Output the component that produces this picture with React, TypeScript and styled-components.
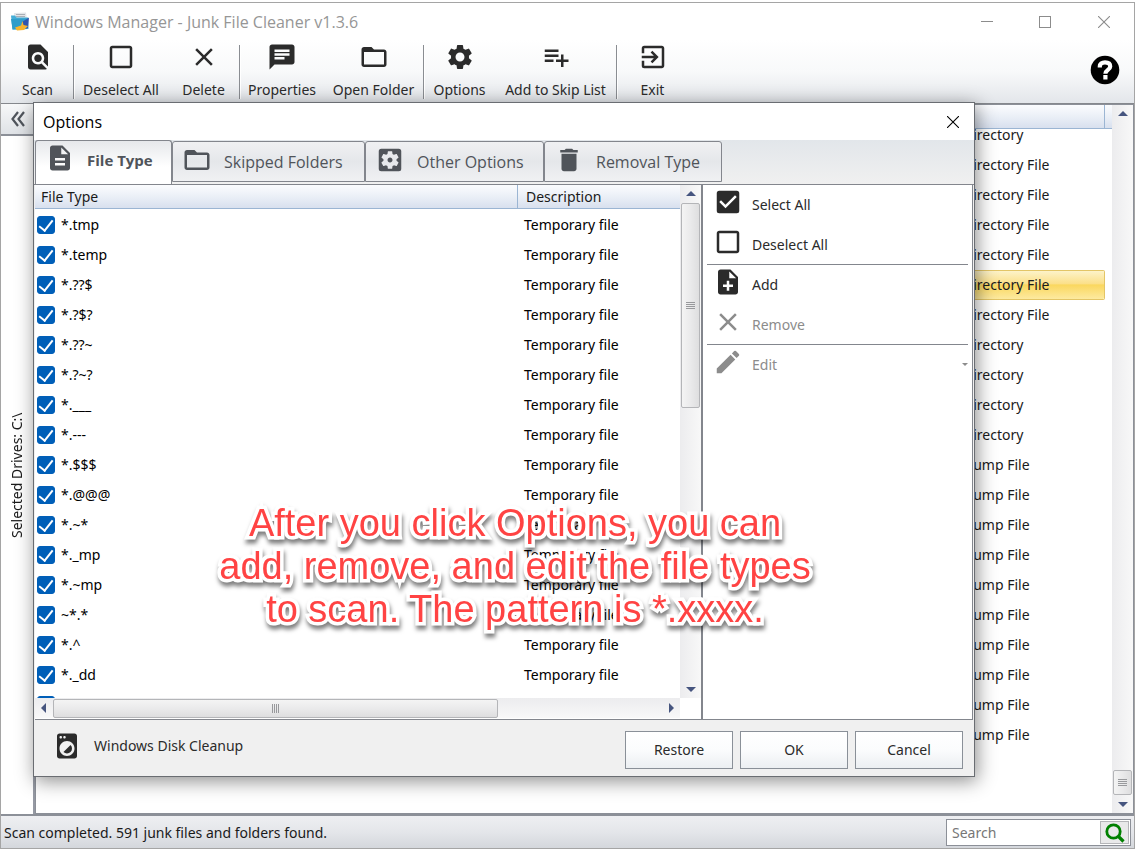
import React, { useState } from "react";
import styled, { createGlobalStyle, css } from "styled-components";
import type { IconType } from "react-icons";
import {
  MdFindInPage,
  MdCheckBoxOutlineBlank,
  MdClose,
  MdChat,
  MdFolderOpen,
  MdSettings,
  MdPlaylistAdd,
  MdExitToApp,
  MdDescription,
  MdSettingsApplications,
  MdDelete,
  MdCheckBox,
  MdNoteAdd,
  MdEdit,
  MdLocalLaundryService,
} from "react-icons/md";

const GlobalStyle = createGlobalStyle`
  * { box-sizing: border-box; }
  body {
    margin: 0;
    background: #fff;
    color: #1a1a1a;
    font-family: "Noto Sans", "Open Sans", sans-serif;
    font-size: 14px;
    line-height: 20px;
  }
  button, input { font: inherit; color: inherit; margin: 0; }
  button { border: 0; padding: 0; background: none; }
`;

const headingFont = css`
  font-family: "Open Sans", "Noto Sans", sans-serif;
  font-size: 16px;
  font-weight: 400;
`;

const AppWindow = styled.div`
  position: relative;
  display: flex;
  flex-direction: column;
  height: calc(100vh - 2px);
  margin-top: 2px;
  border: 1px solid #a5a5a5;
  overflow: hidden;
`;

const TitleBar = styled.header`
  display: flex;
  align-items: center;
  height: 37px;
  padding-left: 9px;
`;

const AppTitle = styled.h1`
  margin: 0 0 0 5px;
  flex: 1;
  ${headingFont}
  color: #969696;
`;

const CaptionButton = styled.button<{ $tone: string; $width?: number }>`
  display: grid;
  place-items: center;
  width: ${(p) => p.$width ?? 58}px;
  height: 36px;
  color: ${(p) => p.$tone};
`;

const Toolbar = styled.nav`
  display: flex;
  height: 64px;
  padding-left: 1px;
  background: linear-gradient(#fff, #f8f9fa 50%, #e3e6ea);
  border-bottom: 1px solid #85888d;
`;

const ToolItem = styled.button<{ $width: number }>`
  display: flex;
  flex-direction: column;
  align-items: center;
  gap: 8px;
  width: ${(p) => p.$width}px;
  height: 62px;
  padding-top: 2px;
  color: #2b2b2b;
  white-space: nowrap;
`;

const ToolSeparator = styled.span`
  width: 1px;
  margin: 5px 0 4px;
  background: #8a8d92;
  box-shadow: 1px 0 #fff;
`;

const HelpButton = styled.button`
  margin-left: auto;
  padding-right: 14px;
  height: 60px;
  display: grid;
  place-items: center;
  color: #000;
`;

const Workspace = styled.main`
  flex: 1;
  min-height: 0;
  display: flex;
`;

const SidePanel = styled.aside`
  display: flex;
  flex-direction: column;
  width: 34px;
  border-right: 2px solid #9599a3;
`;

const CollapseButton = styled.button`
  display: grid;
  place-items: center;
  height: 32px;
  padding-left: 2px;
  background: linear-gradient(#f7f8f9, #dfe2e6);
  border-bottom: 2px solid #8c9098;
  color: #50555c;
`;

const DrivesLabel = styled.div`
  flex: 1;
  display: flex;
  align-items: center;
  justify-content: center;
  writing-mode: vertical-rl;
  transform: rotate(180deg);
`;

const ResultsPane = styled.section`
  flex: 1;
  min-width: 0;
  display: flex;
  border: 1px solid #8c9098;
`;

const ResultsView = styled.div`
  flex: 1;
  min-width: 0;
  overflow: hidden;
  isolation: isolate;
`;

const headerFill = css`
  background: linear-gradient(#fbfcfe, #e9eef6 55%, #d8e0ee);
  border-bottom: 1px solid #9bb5d3;
  color: #1a1a1a;
`;

const ResultsHeader = styled.div`
  position: relative;
  z-index: 1;
  display: flex;
  height: 24px;
  padding-right: 7px;
  ${headerFill}
  &::after {
    content: "";
    margin-left: auto;
    border-right: 1px solid #9bb5d3;
  }
`;

const ResultsTable = styled.table`
  width: calc(100% - 7px);
  margin-top: -9px;
  border-collapse: separate;
  border-spacing: 0;
  table-layout: fixed;
`;

const ResultRow = styled.tr<{ $selected?: boolean }>`
  height: 30px;
  td {
    padding: 0 0 0 3px;
    border: solid transparent;
    border-width: 1px 0;
  }
  ${(p) =>
    p.$selected &&
    css`
      td {
        background: linear-gradient(#fdf3c9, #fbe08a 45%, #fad75f 50%, #fdeaa0);
        background-clip: padding-box;
        border-color: #e3c566;
      }
      td:last-child {
        border-right: 1px solid #e3c566;
        border-radius: 0 2px 2px 0;
      }
    `}
`;

const NameCol = styled.col``;
const KindCol = styled.col`
  width: 145px;
`;

const VScroll = styled.div`
  display: flex;
  flex-direction: column;
  align-items: center;
  width: 21px;
  flex: none;
  background: linear-gradient(90deg, #ececee, #f8f8f8);
`;

const HScroll = styled.div`
  display: flex;
  align-items: center;
  flex: 1;
  height: 20px;
  background: linear-gradient(#ececee, #f8f8f8);
`;

const ScrollArrow = styled.button`
  display: grid;
  place-items: center;
  width: 18px;
  height: 18px;
  flex: none;
  color: #46557f;
`;

const VThumb = styled.div<{ $size: string }>`
  display: grid;
  place-items: center;
  width: 19px;
  flex: 0 0 ${(p) => p.$size};
  background: linear-gradient(90deg, #f4f4f4, #eaeaeb 50%, #dededf);
  border: 1px solid #b4b5b8;
  border-radius: 2px;
  color: #98999c;
`;

const HThumb = styled.div`
  display: grid;
  place-items: center;
  flex: 0 0 69%;
  height: 19px;
  background: linear-gradient(#f4f4f4, #eaeaeb 50%, #dededf);
  border: 1px solid #b4b5b8;
  border-radius: 2px;
  color: #98999c;
`;

const Spring = styled.span`
  flex: 1;
`;

const StatusBar = styled.footer`
  display: flex;
  align-items: center;
  height: 34px;
  padding: 1px 3px 0;
  border-top: 2px solid #8c9098;
  background: linear-gradient(#eeeff2, #e4e6ea 50%, #d4d7dc);
`;

const SearchBox = styled.form`
  display: flex;
  align-items: center;
  width: 185px;
  height: 27px;
  margin-left: auto;
  padding: 1px;
  background: #fff;
  border: 1px solid #8c9098;
`;

const SearchInput = styled.input`
  flex: 1;
  min-width: 0;
  height: 23px;
  padding: 0 4px;
  border: 0;
  background: none;
  outline: none;
  &::placeholder {
    color: #777;
    opacity: 1;
  }
`;

const SearchButton = styled.button`
  display: grid;
  place-items: center;
  width: 29px;
  height: 23px;
  background: #e9e9ea;
  border: 1px solid #b4b5b8;
  color: #008000;
`;

const Dialog = styled.div`
  position: absolute;
  top: 99px;
  right: 159px;
  bottom: 71px;
  left: 32px;
  display: flex;
  flex-direction: column;
  background: #f0f0f0;
  border: 1px solid #6a6d72;
  box-shadow: 2px 4px 18px rgba(0, 0, 0, 0.45);
`;

const DialogTitle = styled.div`
  display: flex;
  align-items: center;
  justify-content: space-between;
  flex: none;
  height: 37px;
  padding-left: 9px;
  background: #fff;
  color: #000;
  h2 {
    margin: 0;
    ${headingFont}
  }
`;

const TabStrip = styled.div`
  display: flex;
  align-items: flex-end;
  flex: none;
  height: 45px;
  background: linear-gradient(#e2e6ea, #f0f0f0);
  padding: 0 0 1px 1px;
  border-bottom: 1px solid #83868d;
`;

const Tab = styled.button<{ $active?: boolean; $width: number }>`
  display: flex;
  align-items: center;
  gap: 12px;
  width: ${(p) => p.$width}px;
  height: 41px;
  padding-left: 9px;
  margin-bottom: 1px;
  border: 1px solid #83868d;
  border-radius: 3px 3px 0 0;
  background: linear-gradient(#f0f1f3, #e5e7ea 50%, #f0f1f3);
  color: #50545a;
  ${headingFont}
  white-space: nowrap;
  svg {
    margin-bottom: 4px;
  }
  ${(p) =>
    p.$active &&
    css`
      height: 44px;
      margin-bottom: -1px;
      padding-bottom: 5px;
      border-bottom: 0;
      background: linear-gradient(#e6e8eb, #fff 60%);
      font-size: 15px;
      font-weight: 700;
    `}
`;

const DialogContent = styled.div`
  flex: 1;
  min-height: 0;
  display: flex;
  margin: 0 1px;
  background: #fff;
  border-bottom: 1px solid #83868d;
`;

const ListPane = styled.section`
  flex: 1;
  min-width: 0;
  display: flex;
  flex-direction: column;
`;

const ListArea = styled.div`
  flex: 1;
  min-height: 0;
  display: flex;
`;

const ListView = styled.div`
  flex: 1;
  min-width: 0;
  overflow: hidden;
`;

const TypeTable = styled.table`
  width: 100%;
  border-collapse: separate;
  border-spacing: 0;
  table-layout: fixed;
  color: #000;
  th {
    height: 24px;
    padding: 0 0 0 6px;
    text-align: left;
    font-weight: 400;
    ${headerFill}
  }
  th + th {
    padding-left: 8px;
    border-left: 1px solid #9bb5d3;
  }
  td {
    height: 30px;
    padding: 2px 0 0 2px;
  }
  td + td {
    padding-left: 7px;
  }
`;

const DescriptionCol = styled.col`
  width: 163px;
`;

const PatternLabel = styled.label`
  display: flex;
  align-items: center;
  gap: 6px;
`;

const CheckInput = styled.input`
  appearance: none;
  display: grid;
  place-items: center;
  width: 18px;
  height: 18px;
  border-radius: 3px;
  border: 1px solid #005fb8;
  background: #fff;
  &:checked {
    background: #005fb8;
  }
  &:checked::after {
    content: "";
    width: 6px;
    height: 12px;
    margin-top: -3px;
    border: solid #fff;
    border-width: 0 2px 2px 0;
    transform: rotate(38deg);
  }
`;

const ScrollCorner = styled.div`
  display: flex;
  height: 21px;
  padding: 0 21px 1px 0;
`;

const ActionPane = styled.aside`
  display: flex;
  flex-direction: column;
  width: 272px;
  padding: 0 4px;
  border-left: 2px solid #83868d;
  border-right: 1px solid #83868d;
`;

const ActionGroup = styled.div`
  display: flex;
  flex-direction: column;
  & + & {
    margin-top: -1px;
    border-top: 1px solid #83868d;
  }
`;

const ActionButton = styled.button`
  display: flex;
  align-items: center;
  gap: 9px;
  height: 40px;
  padding-left: 6px;
  color: #2b2b2b;
  text-align: left;
  svg:first-child {
    margin-bottom: 6px;
  }
  &:disabled {
    color: #8c8c8c;
  }
`;

const MenuArrow = styled.svg`
  margin-left: auto;
`;

const DialogFooter = styled.div`
  display: flex;
  align-items: center;
  gap: 7px;
  flex: none;
  height: 56px;
  padding: 4px 11px 0 18px;
`;

const CleanupButton = styled.button`
  display: flex;
  align-items: center;
  gap: 12px;
  margin-right: auto;
  padding-bottom: 8px;
  color: #2b2b2b;
`;

const PushButton = styled.button`
  width: 108px;
  height: 38px;
  border: 1px solid #8a9098;
  background: linear-gradient(#fff, #fbfcfd 50%, #eceff2);
  color: #2b2b2b;
`;

const Callout = styled.p`
  position: absolute;
  z-index: 2;
  top: 499px;
  left: 214px;
  width: 600px;
  margin: 0;
  font-family: "Liberation Sans", Arial, sans-serif;
  font-size: 38px;
  line-height: 43px;
  text-align: center;
  white-space: nowrap;
  color: #ff4343;
  paint-order: stroke fill;
  -webkit-text-stroke: 7px #fff;
  filter: drop-shadow(1px 4px 2px rgba(0, 0, 0, 0.5));
  pointer-events: none;
`;

const AppLogo = () => (
  <svg width="20" height="20" viewBox="0 0 20 20" aria-hidden="true">
    <path d="M4 1l12-.5 1 7-12 1z" fill="#e3e5e8" />
    <path d="M6 2.500h9M6 4.500h9" stroke="#a9afb6" />
    <path d="M1 3.500h4l1.500 2H18l.5 11.500-16 .5z" fill="#45add6" />
    <path d="M1 7l17-.5-1 10.500-14.500.5z" fill="#2f9dcb" />
    <path d="M12 10L19 5.500 18 16l-4 1z" fill="#3056ae" />
    <path d="M12.500 9l1 4 4.500 1-4 4-7 .5-2-3 6-2z" fill="#f8b42c" />
  </svg>
);

const HelpGlyph = () => (
  <svg width="30" height="30" viewBox="0 0 30 30" aria-hidden="true">
    <circle cx="15" cy="15" r="14.300" fill="currentColor" />
    <path
      d="M9.800 12.500V11.500C9.800 9 11.800 7.400 15 7.400c3.200 0 5.200 1.500 5.200 4 0 3.600-4.800 3.300-4.800 7.300"
      fill="none"
      stroke="#fff"
      strokeWidth="4.200"
    />
    <path d="M13.300 20h4.200v4.500h-4.200z" fill="#fff" />
  </svg>
);

const MagnifierGlyph = () => (
  <svg width="20" height="20" viewBox="0 0 20 20" aria-hidden="true">
    <circle cx="8.500" cy="8.500" r="6.700" fill="none" stroke="currentColor" strokeWidth="2.800" />
    <path d="M13 13l5.500 5.500" stroke="currentColor" strokeWidth="3.200" />
  </svg>
);

const CrossGlyph = () => (
  <svg width="12" height="12" viewBox="0 0 12 12" aria-hidden="true">
    <path d="M0 0l12 12M12 0L0 12" stroke="currentColor" strokeWidth="1.100" />
  </svg>
);

const arrowPaths = {
  up: "M0 7L5 2l5 5z",
  down: "M0 3h10L5 8z",
  left: "M7 0v10L2 5z",
  right: "M3 0l5 5-5 5z",
};

const ArrowGlyph = ({ dir }: { dir: keyof typeof arrowPaths }) => (
  <svg width="10" height="10" viewBox="0 0 10 10" aria-hidden="true">
    <path d={arrowPaths[dir]} fill="currentColor" />
  </svg>
);

const GripGlyph = ({ vertical }: { vertical?: boolean }) => (
  <svg width="9" height="9" viewBox="0 0 9 9" aria-hidden="true">
    <path
      d={vertical ? "M1.500 0v9M3.500 0v9M5.500 0v9M7.500 0v9" : "M0 1.500h9M0 3.500h9M0 5.500h9M0 7.500h9"}
      stroke="currentColor"
    />
  </svg>
);

const toolGroups: { label: string; icon: IconType; width: number }[][] = [
  [{ label: "Scan", icon: MdFindInPage, width: 71 }],
  [
    { label: "Deselect All", icon: MdCheckBoxOutlineBlank, width: 94 },
    { label: "Delete", icon: MdClose, width: 71 },
  ],
  [
    { label: "Properties", icon: MdChat, width: 84 },
    { label: "Open Folder", icon: MdFolderOpen, width: 99 },
  ],
  [
    { label: "Options", icon: MdSettings, width: 71 },
    { label: "Add to Skip List", icon: MdPlaylistAdd, width: 121 },
  ],
  [{ label: "Exit", icon: MdExitToApp, width: 71 }],
];

const tabs: { label: string; icon: IconType; width: number }[] = [
  { label: "File Type", icon: MdDescription, width: 137 },
  { label: "Skipped Folders", icon: MdFolderOpen, width: 193 },
  { label: "Other Options", icon: MdSettingsApplications, width: 179 },
  { label: "Removal Type", icon: MdDelete, width: 178 },
];

const patterns = [
  "*.tmp", "*.temp", "*.??$", "*.?$?", "*.??~", "*.?~?", "*.___", "*.---", "*.$$$",
  "*.@@@", "*.~*", "*._mp", "*.~mp", "~*.*", "*.^", "*._dd", "",
];

const results = [
  "Directory",
  ...Array(6).fill("Directory File"),
  ...Array(4).fill("Directory"),
  ...Array(10).fill("Dump File"),
];
const selectedResult = 5;

const actionGroups: { label: string; icon: IconType; disabled?: boolean; menu?: boolean }[][] = [
  [
    { label: "Select All", icon: MdCheckBox },
    { label: "Deselect All", icon: MdCheckBoxOutlineBlank },
  ],
  [
    { label: "Add", icon: MdNoteAdd },
    { label: "Remove", icon: MdClose, disabled: true },
  ],
  [{ label: "Edit", icon: MdEdit, disabled: true, menu: true }],
];

export default function App() {
  const [checked, setChecked] = useState(() => patterns.map(() => true));
  const toggle = (index: number) =>
    setChecked((prev) => prev.map((value, i) => (i === index ? !value : value)));

  return (
    <>
      <GlobalStyle />
      <AppWindow>
        <TitleBar>
          <AppLogo />
          <AppTitle>Windows Manager - Junk File Cleaner v1.3.6</AppTitle>
          <CaptionButton $tone="#8c8c8c" aria-label="Minimize">
            <svg width="12" height="12" aria-hidden="true">
              <path d="M0 5.500h12" stroke="currentColor" />
            </svg>
          </CaptionButton>
          <CaptionButton $tone="#8c8c8c" aria-label="Maximize">
            <svg width="12" height="12" aria-hidden="true">
              <rect x="0.500" y="0.500" width="11" height="11" fill="none" stroke="currentColor" />
            </svg>
          </CaptionButton>
          <CaptionButton $tone="#8c8c8c" $width={60} aria-label="Close window">
            <CrossGlyph />
          </CaptionButton>
        </TitleBar>

        <Toolbar>
          {toolGroups.map((group, i) => (
            <React.Fragment key={i}>
              {i > 0 && <ToolSeparator />}
              {group.map(({ label, icon: Icon, width }) => (
                <ToolItem key={label} $width={width}>
                  <Icon size={30} />
                  {label}
                </ToolItem>
              ))}
            </React.Fragment>
          ))}
          <HelpButton aria-label="Help">
            <HelpGlyph />
          </HelpButton>
        </Toolbar>

        <Workspace>
          <SidePanel>
            <CollapseButton aria-label="Collapse panel">
              <svg width="14" height="16" viewBox="0 0 14 16" aria-hidden="true">
                <path d="M7 1L1.500 8 7 15M13 1L7.500 8l5.500 7" fill="none" stroke="currentColor" strokeWidth="2.200" />
              </svg>
            </CollapseButton>
            <DrivesLabel>Selected Drives: C:\</DrivesLabel>
          </SidePanel>
          <ResultsPane>
            <ResultsView>
              <ResultsHeader />
              <ResultsTable>
                <colgroup>
                  <NameCol />
                  <KindCol />
                </colgroup>
                <tbody>
                  {results.map((kind, i) => (
                    <ResultRow key={i} $selected={i === selectedResult}>
                      <td />
                      <td>{kind}</td>
                    </ResultRow>
                  ))}
                </tbody>
              </ResultsTable>
            </ResultsView>
            <VScroll>
              <ScrollArrow aria-label="Scroll up">
                <ArrowGlyph dir="up" />
              </ScrollArrow>
              <Spring />
              <VThumb $size="25px">
                <GripGlyph />
              </VThumb>
              <ScrollArrow aria-label="Scroll down">
                <ArrowGlyph dir="down" />
              </ScrollArrow>
            </VScroll>
          </ResultsPane>
        </Workspace>

        <StatusBar>
          Scan completed. 591 junk files and folders found.
          <SearchBox onSubmit={(e) => e.preventDefault()}>
            <SearchInput type="text" placeholder="Search" aria-label="Search" />
            <SearchButton aria-label="Run search">
              <MagnifierGlyph />
            </SearchButton>
          </SearchBox>
        </StatusBar>

        <Dialog role="dialog" aria-label="Options">
          <DialogTitle>
            <h2>Options</h2>
            <CaptionButton $tone="#000" $width={42} aria-label="Close">
              <CrossGlyph />
            </CaptionButton>
          </DialogTitle>
          <TabStrip role="tablist">
            {tabs.map(({ label, icon: Icon, width }, i) => (
              <Tab key={label} role="tab" aria-selected={i === 0} $active={i === 0} $width={width}>
                <Icon size={30} />
                {label}
              </Tab>
            ))}
          </TabStrip>
          <DialogContent>
            <ListPane>
              <ListArea>
                <ListView>
                  <TypeTable>
                    <colgroup>
                      <NameCol />
                      <DescriptionCol />
                    </colgroup>
                    <thead>
                      <tr>
                        <th>File Type</th>
                        <th>Description</th>
                      </tr>
                    </thead>
                    <tbody>
                      {patterns.map((pattern, i) => (
                        <tr key={i}>
                          <td>
                            <PatternLabel>
                              <CheckInput
                                type="checkbox"
                                aria-label={pattern || "Pattern"}
                                checked={checked[i]}
                                onChange={() => toggle(i)}
                              />
                              {pattern}
                            </PatternLabel>
                          </td>
                          <td>{pattern && "Temporary file"}</td>
                        </tr>
                      ))}
                    </tbody>
                  </TypeTable>
                </ListView>
                <VScroll>
                  <ScrollArrow aria-label="Scroll list up">
                    <ArrowGlyph dir="up" />
                  </ScrollArrow>
                  <VThumb $size="40%">
                    <GripGlyph />
                  </VThumb>
                  <Spring />
                  <ScrollArrow aria-label="Scroll list down">
                    <ArrowGlyph dir="down" />
                  </ScrollArrow>
                </VScroll>
              </ListArea>
              <ScrollCorner>
                <HScroll>
                  <ScrollArrow aria-label="Scroll left">
                    <ArrowGlyph dir="left" />
                  </ScrollArrow>
                  <HThumb>
                    <GripGlyph vertical />
                  </HThumb>
                  <Spring />
                  <ScrollArrow aria-label="Scroll right">
                    <ArrowGlyph dir="right" />
                  </ScrollArrow>
                </HScroll>
              </ScrollCorner>
            </ListPane>
            <ActionPane>
              {actionGroups.map((group, i) => (
                <ActionGroup key={i}>
                  {group.map(({ label, icon: Icon, disabled, menu }) => (
                    <ActionButton key={label} disabled={disabled}>
                      <Icon size={30} />
                      {label}
                      {menu && (
                        <MenuArrow width="6" height="4" viewBox="0 0 6 4" aria-hidden="true">
                          <path d="M0 0h6L3 3z" fill="currentColor" />
                        </MenuArrow>
                      )}
                    </ActionButton>
                  ))}
                </ActionGroup>
              ))}
            </ActionPane>
          </DialogContent>
          <DialogFooter>
            <CleanupButton>
              <MdLocalLaundryService size={30} />
              Windows Disk Cleanup
            </CleanupButton>
            <PushButton>Restore</PushButton>
            <PushButton>OK</PushButton>
            <PushButton>Cancel</PushButton>
          </DialogFooter>
        </Dialog>

        <Callout>
          After you click Options, you can
          <br />
          add, remove, and edit the file types
          <br />
          to scan. The pattern is *.xxxx.
        </Callout>
      </AppWindow>
    </>
  );
}
